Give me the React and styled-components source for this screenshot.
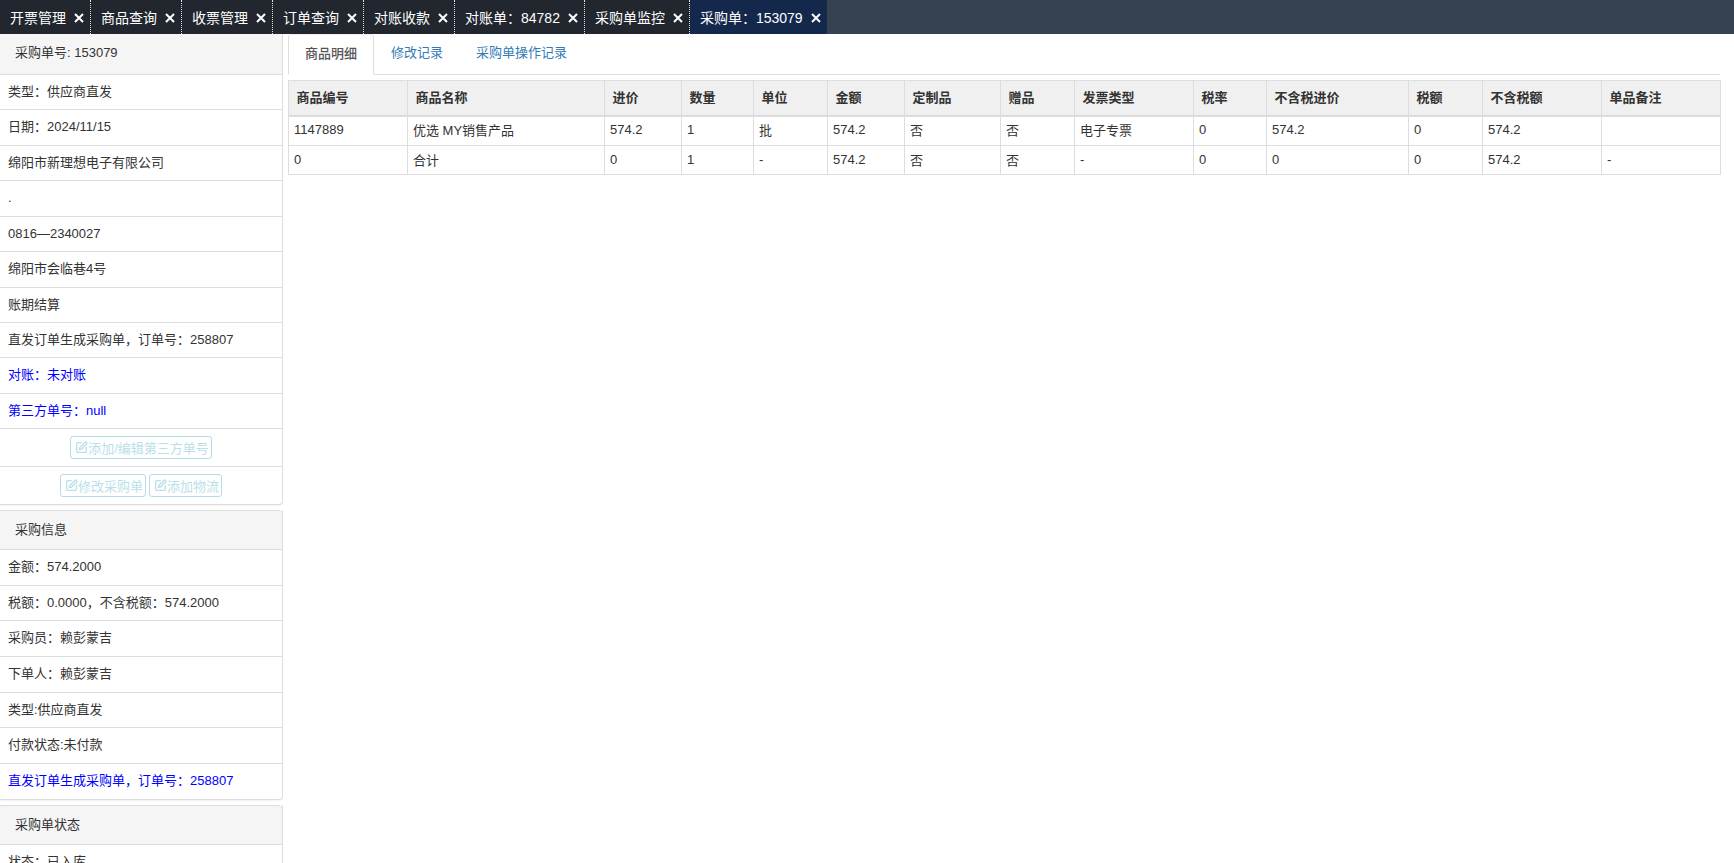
import styled, { createGlobalStyle } from "styled-components";
import { SquarePen } from "lucide-react";

const GlobalStyle = createGlobalStyle`
  html, body {
    margin: 0;
    height: 100%;
    overflow: hidden;
    background: #fff;
  }
  body {
    font-family: "Liberation Sans", "Noto Sans CJK SC", sans-serif;
    font-size: 13px;
    color: #333;
  }
  * { box-sizing: border-box; }
`;

const Page = styled.div`
  height: 100vh;
  display: flex;
  flex-direction: column;
  overflow: hidden;
`;

const TabBar = styled.div`
  display: flex;
  flex: none;
  height: 34px;
  background: #36424f;
`;

const TopTab = styled.div`
  display: flex;
  align-items: center;
  height: 34px;
  padding: 0 6px 0 10px;
  gap: 8px;
  color: #fff;
  font-size: 14px;
  white-space: nowrap;
  background: ${(p) => (p.$active ? "#14284b" : "#22262e")};
  border-right: ${(p) => (p.$active ? "none" : "1px dotted #ddd")};
`;

const CloseX = styled.svg`
  width: 10px;
  height: 10px;
  flex: none;
  margin-top: 2px;
`;

const Main = styled.div`
  flex: 1;
  display: flex;
  min-height: 0;
`;

const Sidebar = styled.div`
  flex: none;
  width: 283px;
  display: flex;
  flex-direction: column;
  gap: 5px;
`;

const Panel = styled.div`
  flex: none;
  border: 1px solid #ddd;
  border-left: none;
  border-top: none;
  border-radius: 0 0 4px 0;
  box-shadow: 0 1px 1px rgba(0, 0, 0, 0.05);
`;

const PanelHead = styled.div`
  height: ${(p) => (p.$first ? 41 : 40)}px;
  line-height: 37px;
  padding-left: 15px;
  background: #f5f5f5;
  border-bottom: 1px solid #ddd;
  border-top: ${(p) => (p.$first ? "none" : "1px solid #ddd")};
  border-top-right-radius: 4px;
  font-size: 13px;
`;

const Row = styled.div`
  height: ${(p) => p.$h || 35.43}px;
  line-height: 33px;
  padding-left: 8px;
  font-size: 13px;
  border-bottom: 1px solid #ddd;
  color: ${(p) => (p.$blue ? "#0000ff" : "#333")};

  &:last-child {
    border-bottom: none;
  }
`;

const ButtonRow = styled.div`
  display: flex;
  justify-content: center;
  align-items: center;
  gap: 3px;
  height: ${(p) => p.$h}px;
  border-bottom: 1px solid #ddd;

  &:last-child {
    border-bottom: none;
  }
`;

const OutlineButton = styled.div`
  display: flex;
  align-items: center;
  height: 23px;
  padding: 0 2px 0 4px;
  font-size: 13px;
  color: #b9dfe9;
  border: 1px solid #b6dce7;
  border-radius: 3px;
  white-space: nowrap;

  svg {
    width: 13px;
    height: 13px;
    flex: none;
  }
`;

const Content = styled.div`
  flex: 1;
  min-width: 0;
  padding: 0 14px 0 5px;
`;

const Tabs = styled.div`
  display: flex;
  height: 41px;
  border-bottom: 1px solid #ddd;
`;

const Tab = styled.div`
  height: ${(p) => (p.$active ? 41 : 40)}px;
  line-height: 37px;
  padding: 0 16px;
  margin-right: 1px;
  font-size: 13px;
  color: ${(p) => (p.$active ? "#555" : "#337ab7")};
  font-weight: ${(p) => (p.$active ? 500 : 400)};
  background: #fff;
  ${(p) =>
    p.$active
      ? "border: 1px solid #ddd; border-bottom: 1px solid #fff; border-top-color: #eee; border-radius: 4px 4px 0 0;"
      : ""}
`;

const Table = styled.table`
  width: 1432px;
  margin-top: 5px;
  border-collapse: collapse;
  table-layout: fixed;
  font-size: 13px;
`;

const Th = styled.th`
  height: 35px;
  padding: 0 0 3px 7.5px;
  text-align: left;
  font-weight: 700;
  background: #f0f0f0;
  border: 1px solid #ddd;
  border-bottom: 2px solid #ddd;
`;

const Td = styled.td`
  height: ${(p) => p.$h}px;
  padding: 0 0 2px 5px;
  border: 1px solid #ddd;
`;

const tabs = [
  "开票管理",
  "商品查询",
  "收票管理",
  "订单查询",
  "对账收款",
  "对账单：84782",
  "采购单监控",
  "采购单：153079",
];

const columns = [
  ["商品编号", 119],
  ["商品名称", 197],
  ["进价", 77],
  ["数量", 72],
  ["单位", 74],
  ["金额", 77],
  ["定制品", 96],
  ["赠品", 74],
  ["发票类型", 119],
  ["税率", 73],
  ["不含税进价", 142],
  ["税额", 74],
  ["不含税额", 119],
  ["单品备注", 119],
];

const rows = [
  ["1147889", "优选 MY销售产品", "574.2", "1", "批", "574.2", "否", "否", "电子专票", "0", "574.2", "0", "574.2", ""],
  ["0", "合计", "0", "1", "-", "574.2", "否", "否", "-", "0", "0", "0", "574.2", "-"],
];

const orderRows = [
  "类型：供应商直发",
  "日期：2024/11/15",
  "绵阳市新理想电子有限公司",
  ".",
  "0816—2340027",
  "绵阳市会临巷4号",
  "账期结算",
  "直发订单生成采购单，订单号：258807",
];

const buyRows = [
  "金额：574.2000",
  "税额：0.0000，不含税额：574.2000",
  "采购员：赖彭蒙吉",
  "下单人：赖彭蒙吉",
  "类型:供应商直发",
  "付款状态:未付款",
];

const App = () => {
  return (
    <Page>
      <GlobalStyle />
      <TabBar>
        {tabs.map((t, i) => (
          <TopTab key={t} $active={i === tabs.length - 1}>
            {t}
            <CloseX viewBox="0 0 10 10">
              <path d="M1 1 L9 9 M9 1 L1 9" stroke="#fff" strokeWidth="2" />
            </CloseX>
          </TopTab>
        ))}
      </TabBar>
      <Main>
        <Sidebar>
          <Panel>
            <PanelHead $first>采购单号: 153079</PanelHead>
            {orderRows.map((r) => (
              <Row key={r}>{r}</Row>
            ))}
            <Row $blue>对账：未对账</Row>
            <Row $blue>第三方单号：null</Row>
            <ButtonRow $h={38}>
              <OutlineButton>
                <SquarePen strokeWidth={2.4} />
                添加/编辑第三方单号
              </OutlineButton>
            </ButtonRow>
            <ButtonRow $h={37}>
              <OutlineButton>
                <SquarePen strokeWidth={2.4} />
                修改采购单
              </OutlineButton>
              <OutlineButton>
                <SquarePen strokeWidth={2.4} />
                添加物流
              </OutlineButton>
            </ButtonRow>
          </Panel>
          <Panel>
            <PanelHead>采购信息</PanelHead>
            {buyRows.map((r) => (
              <Row key={r} $h={35.6}>
                {r}
              </Row>
            ))}
            <Row $blue $h={35.6}>
              直发订单生成采购单，订单号：258807
            </Row>
          </Panel>
          <Panel>
            <PanelHead>采购单状态</PanelHead>
            <Row>状态：已入库</Row>
          </Panel>
        </Sidebar>
        <Content>
          <Tabs>
            <Tab $active>商品明细</Tab>
            <Tab>修改记录</Tab>
            <Tab>采购单操作记录</Tab>
          </Tabs>
          <Table>
            <colgroup>
              {columns.map(([name, w]) => (
                <col key={name} width={w} />
              ))}
            </colgroup>
            <thead>
              <tr>
                {columns.map(([name]) => (
                  <Th key={name}>{name}</Th>
                ))}
              </tr>
            </thead>
            <tbody>
              {rows.map((row, i) => (
                <tr key={i}>
                  {row.map((cell, j) => (
                    <Td key={j} $h={i === 0 ? 30 : 29}>
                      {cell}
                    </Td>
                  ))}
                </tr>
              ))}
            </tbody>
          </Table>
        </Content>
      </Main>
    </Page>
  );
};

export default App;
